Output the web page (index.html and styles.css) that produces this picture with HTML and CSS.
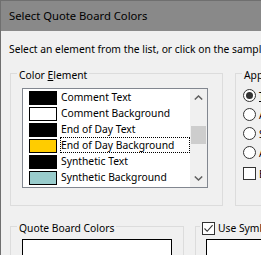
FILE: index.html
```html
<html>
<head>
<title>Select Quote Board Colors</title>
<link rel="stylesheet" href="styles.css">
</head>
<body>
<div class="window">
  <div class="titlebar">Select Quote Board Colors</div>
  <div class="client">
    <p class="intro">Select an element from the list, or click on the sample text below to change its color.</p>

    <div class="row top-row">
      <fieldset class="group element-group">
        <legend>Color <u>E</u>lement</legend>
        <div class="listbox">
          <ul class="items">
            <li class="item"><span class="swatch black"></span><span class="item-label">Comment Text</span></li>
            <li class="item"><span class="swatch white"></span><span class="item-label">Comment Background</span></li>
            <li class="item"><span class="swatch black"></span><span class="item-label">End of Day Text</span></li>
            <li class="item"><span class="swatch gold"></span><span class="item-label focused">End of Day Background</span></li>
            <li class="item"><span class="swatch black"></span><span class="item-label">Synthetic Text</span></li>
            <li class="item"><span class="swatch teal"></span><span class="item-label">Synthetic Background</span></li>
          </ul>
          <div class="scrollbar">
            <div class="scroll-btn">
              <svg width="9" height="5" viewBox="0 0 9 5"><polyline points="0.8,4.5 4.5,1 8.2,4.5" fill="none" stroke="#606060" stroke-width="1.5"/></svg>
            </div>
            <div class="scroll-track"><div class="scroll-thumb"></div></div>
            <div class="scroll-btn">
              <svg width="9" height="5" viewBox="0 0 9 5"><polyline points="0.8,0.5 4.5,4 8.2,0.5" fill="none" stroke="#606060" stroke-width="1.5"/></svg>
            </div>
          </div>
        </div>
      </fieldset>

      <fieldset class="group appearance-group">
        <legend>Appearance</legend>
        <div class="options">
          <label class="option"><span class="radio checked"></span><span><u>T</u>raditional</span></label>
          <label class="option"><span class="radio"></span><span>Alternate</span></label>
          <label class="option"><span class="radio"></span><span>Shaded</span></label>
          <label class="option"><span class="radio"></span><span>Automatic</span></label>
          <label class="option check-option"><span class="checkbox"></span><span>Bold prices</span></label>
        </div>
      </fieldset>
    </div>

    <div class="row bottom-row">
      <fieldset class="group board-group">
        <legend>Quote Board Colors</legend>
        <div class="sample"></div>
      </fieldset>
      <fieldset class="group symbol-group">
        <legend class="check-legend">
          <span class="checkbox">
            <svg width="11" height="11" viewBox="0 0 11 11"><polyline points="1.5,5.5 4.2,8.3 9.6,2.2" fill="none" stroke="#333" stroke-width="1.1"/></svg>
          </span>
          <span>Use Symbol Colors</span>
        </legend>
        <div class="sample"></div>
      </fieldset>
    </div>
  </div>
</div>
</body>
</html>
```

FILE: styles.css
```css
* { box-sizing: border-box; }

body {
  margin: 0;
  overflow: hidden;
  background: #f0f0f0;
  font-family: "Noto Sans", sans-serif;
  font-size: 10.3px;
  color: #000;
}

.window {
  width: 420px;
  height: 255px;
  border-left: 1px solid #6f6f6f;
  border-top: 1px solid #6f6f6f;
  background: #f0f0f0;
}

.titlebar {
  height: 30px;
  line-height: 30px;
  padding-left: 8px;
  font-size: 11.25px;
  background: #898989;
  white-space: nowrap;
}

.client { padding: 10px 0 0 8px; }

.intro { margin: 0; line-height: 16px; white-space: nowrap; }

.row { display: flex; margin-left: 1px; }
.top-row { margin-top: 6px; gap: 12px; }
.bottom-row { margin-top: 10px; gap: 11px; }

/* group boxes */
.group {
  margin: 0;
  padding: 0;
  min-width: 0;
  border: 1px solid #dcdcdc;
}
.group legend {
  margin-left: 6px;
  padding: 4px 2px 0;
  line-height: 16px;
  white-space: nowrap;
}
.element-group { width: 213px; flex: none; }
.appearance-group { width: 200px; flex: none; }
.board-group { width: 174px; flex: none; }
.symbol-group { width: 200px; flex: none; }

/* list box */
.listbox {
  display: flex;
  width: 186px;
  height: 100px;
  margin: 5px 0 17px 11px;
  border: 1px solid #828790;
  background: #fff;
}
.items { flex: 1; margin: 0; padding: 0; list-style: none; }
.item { display: flex; height: 16px; padding-left: 6px; }
.swatch {
  width: 28px;
  height: 14px;
  margin-top: 2px;
  border: 1px solid #000;
}
.swatch.black { background: #000; }
.swatch.white { background: #fff; }
.swatch.gold { background: #ffcc00; }
.swatch.teal { background: #99cccc; }
.item-label {
  flex: 1;
  margin-left: 3px;
  height: 16px;
  line-height: 15px;
  border: 1px dotted transparent;
  white-space: nowrap;
}
.item-label.focused { border-color: #000; }

.scrollbar {
  width: 17px;
  display: flex;
  flex-direction: column;
  background: #f0f0f0;
}
.scroll-btn {
  height: 17px;
  display: flex;
  align-items: center;
  justify-content: center;
}
.scroll-btn svg { display: block; }
.scroll-track { flex: 1; padding: 0 1px; }
.scroll-thumb { height: 18px; margin-top: 20px; background: #cdcdcd; }

/* radio buttons and check boxes */
.options { display: flex; flex-direction: column; padding: 3px 0 0 7px; }
.option {
  display: flex;
  align-items: center;
  gap: 3px;
  height: 19px;
  white-space: nowrap;
}
.check-option { margin-top: 2px; }
.radio {
  width: 13px;
  height: 13px;
  flex: none;
  border: 1px solid #333;
  border-radius: 50%;
  background: #fff;
  display: flex;
  align-items: center;
  justify-content: center;
}
.radio.checked::after {
  content: "";
  width: 7px;
  height: 7px;
  border-radius: 50%;
  background: #333;
}
.checkbox {
  width: 13px;
  height: 13px;
  flex: none;
  border: 1px solid #333;
  background: #fff;
}
.checkbox svg { display: block; }

.group .check-legend {
  display: flex;
  align-items: center;
  gap: 3px;
  margin-left: 4px;
}

.sample {
  height: 60px;
  margin: 3px 11px 0;
  border: 1px solid #000;
  background: #fff;
}
.symbol-group .sample { margin-left: 10px; }
```
